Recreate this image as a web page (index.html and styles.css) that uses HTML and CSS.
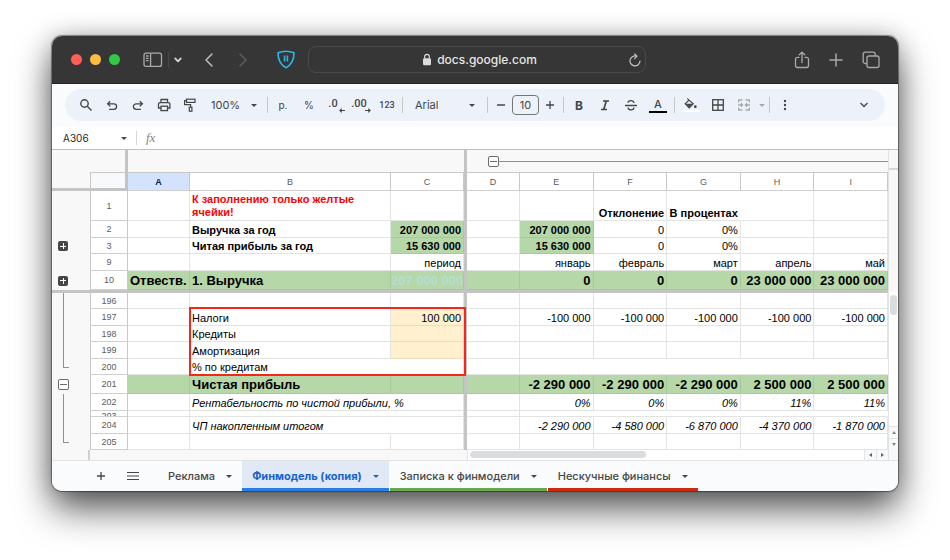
FILE: index.html
```html
<!DOCTYPE html>
<html lang="ru">
<head>
    <meta charset="UTF-8">
    <title>Финмодель</title>
    <link rel="stylesheet" href="styles.css">
</head>
<body>
<div class="window">
    <header class="titlebar">
        <div class="titlebar-left">
            <div class="lights"><span class="light red"></span><span class="light yellow"></span><span class="light green"></span></div>
            <button class="sidebar-btn" aria-label="Боковая панель"><svg width="20" height="16" viewBox="0 0 20 16" fill="none" stroke="#a9a9a9" stroke-width="1.3"><rect x="1" y="1.2" width="17.5" height="13.2" rx="2"/><path d="M7.6 1.2v13.2M3 4h2.6M3 6.3h2.6M3 8.6h2.6"/></svg></button>
            <span class="titlebar-sep"></span>
            <button class="menu-btn" aria-label="Группы вкладок"><svg width="8" height="6" viewBox="0 0 8 6" fill="none" stroke="#ddd" stroke-width="1.6" stroke-linecap="round" stroke-linejoin="round"><path d="M1.2 1.4L4 4.4l2.8-3"/></svg></button>
            <button class="nav-btn" aria-label="Назад"><svg width="10" height="14" viewBox="0 0 10 14" fill="none" stroke="#bdbdbd" stroke-width="1.5" stroke-linecap="round" stroke-linejoin="round"><path d="M8 1L2 7l6 6"/></svg></button>
            <button class="nav-btn" aria-label="Вперёд" disabled><svg width="10" height="14" viewBox="0 0 10 14" fill="none" stroke="#5c5c5c" stroke-width="1.5" stroke-linecap="round" stroke-linejoin="round"><path d="M2 1l6 6-6 6"/></svg></button>
            <button class="shield-btn" aria-label="Защита"><svg width="20" height="19" viewBox="0 0 20 19" fill="none" stroke="#2bb5e8" stroke-width="1.6" stroke-linejoin="round"><path d="M10 1.2c2.8 0 5.6.6 8 1.6.1 7.2-2 11.7-8 15C4 14.500 1.900 10 2 2.800 4.400 1.800 7.200 1.200 10 1.200z"/><path d="M8.600 5.500v6M11.400 5.500v6"/></svg></button>
        </div>
        <div class="address">
            <svg class="lock" width="10" height="13" viewBox="0 0 10 13"><rect x="1" y="5.200" width="8" height="7" rx="1.200" fill="#dcdcdc"/><path d="M2.700 5.500V3.600a2.300 2.300 0 014.600 0v1.900" fill="none" stroke="#dcdcdc" stroke-width="1.200"/></svg>
            <input type="text" class="url" value="docs.google.com" aria-label="Адрес">
            <button class="reload" aria-label="Обновить"><svg width="14" height="14" viewBox="0 0 14 14" fill="none" stroke="#c4c4c4" stroke-width="1.200" stroke-linecap="round" stroke-linejoin="round"><path d="M8.800 3.200A5 5 0 1012 8M6.600.8l2.400 2.400-2.400 2.400"/></svg></button>
        </div>
        <div class="titlebar-right">
            <button aria-label="Поделиться"><svg width="16" height="18" viewBox="0 0 16 18" fill="none" stroke="#a9a9a9" stroke-width="1.300" stroke-linecap="round" stroke-linejoin="round"><path d="M5 6.300H3.500A2 2 0 001.500 8v6.500a2 2 0 002 2h9a2 2 0 002-2V8a2 2 0 00-2-1.700H11M8 11.500V1.200M5.200 3.800L8 1.200l2.800 2.600"/></svg></button>
            <button aria-label="Новая вкладка"><svg width="14" height="14" viewBox="0 0 14 14" stroke="#a9a9a9" stroke-width="1.500" stroke-linecap="round"><path d="M7 1v12M1 7h12"/></svg></button>
            <button aria-label="Все вкладки"><svg width="18" height="18" viewBox="0 0 18 18" fill="none" stroke="#a9a9a9" stroke-width="1.300"><rect x="5" y="5" width="12" height="11.500" rx="2"/><path d="M5 12.500H3.200a2 2 0 01-2-2V3.200a2 2 0 012-2h8a2 2 0 012 2V5"/></svg></button>
        </div>
    </header>

    <div class="toolbar-wrap">
        <div class="toolbar">
            <button class="tool" aria-label="Поиск"><svg width="14" height="14" viewBox="0 0 14 14" fill="none" stroke="#444746" stroke-width="1.400"><circle cx="5.500" cy="5.500" r="3.700"/><path d="M8.300 8.300l4.200 4.200"/></svg></button>
            <button class="tool" aria-label="Отменить"><svg width="14" height="14" viewBox="0 0 14 14" fill="none" stroke="#444746" stroke-width="1.300"><path d="M5.200 3.200L2.600 5.800l2.600 2.600M2.800 5.800h6a2.700 2.700 0 010 5.600H4.200"/></svg></button>
            <button class="tool" aria-label="Повторить"><svg width="14" height="14" viewBox="0 0 14 14" fill="none" stroke="#444746" stroke-width="1.300"><path d="M8.800 3.200l2.600 2.600-2.600 2.600M11.200 5.800h-6a2.700 2.700 0 000 5.600h4.600"/></svg></button>
            <button class="tool" aria-label="Печать"><svg width="14" height="14" viewBox="0 0 14 14" fill="none" stroke="#444746" stroke-width="1.300"><path d="M4 4.500v-3h6.500v3M4 10H1.500V6.200a1.600 1.600 0 011.600-1.600h8.200a1.600 1.600 0 011.600 1.600V10h-2.400"/><rect x="4" y="8.200" width="6.500" height="4.400"/></svg></button>
            <button class="tool" aria-label="Формат по образцу"><svg width="14" height="14" viewBox="0 0 14 14" fill="none" stroke="#444746" stroke-width="1.200"><rect x="3.500" y="1.200" width="8.500" height="3.200"/><path d="M3.500 2.700H1.600V6.700h6v2.500"/><rect x="6.300" y="9.200" width="2.600" height="4"/></svg></button>
            <label class="dropdown zoom"><select aria-label="Масштаб"><option>100%</option></select></label>
            <span class="sep"></span>
            <button class="tool small">р.</button>
            <button class="tool small">%</button>
            <button class="tool decimals" aria-label="Меньше знаков"><span>.0</span><svg width="6" height="5" viewBox="0 0 6 5" fill="none" stroke="#444746" stroke-width="1.100"><path d="M6 2.500H1M2.800.6L.9 2.500l1.900 1.900"/></svg></button>
            <button class="tool decimals" aria-label="Больше знаков"><span>.00</span><svg width="6" height="5" viewBox="0 0 6 5" fill="none" stroke="#444746" stroke-width="1.100"><path d="M0 2.500h5M3.200.6l1.900 1.900-1.900 1.900"/></svg></button>
            <button class="tool number">123</button>
            <span class="sep"></span>
            <label class="dropdown font"><select aria-label="Шрифт"><option>Arial</option></select></label>
            <span class="sep"></span>
            <button class="tool step" aria-label="Уменьшить"><svg width="10" height="10" viewBox="0 0 10 10" stroke="#444746" stroke-width="1.300"><path d="M1 5h8"/></svg></button>
            <input type="text" class="font-size" value="10" aria-label="Размер шрифта">
            <button class="tool step" aria-label="Увеличить"><svg width="10" height="10" viewBox="0 0 10 10" stroke="#444746" stroke-width="1.300"><path d="M1 5h8M5 1v8"/></svg></button>
            <span class="sep"></span>
            <button class="tool bold">B</button>
            <button class="tool" aria-label="Курсив"><svg width="12" height="12" viewBox="0 0 12 12" fill="none" stroke="#444746" stroke-width="1.700"><path d="M4 2h6M2 10.500h6M7.300 2L4.700 10.500"/></svg></button>
            <button class="tool" aria-label="Зачёркнутый"><svg width="14" height="14" viewBox="0 0 14 14" fill="none" stroke="#444746" stroke-width="1.300"><path d="M1 7.500h12M10 5C9.800 3.400 8.600 2.600 7 2.600c-1.700 0-3 .9-3 2.200M4 9.600c.1 1.400 1.300 2.200 3 2.200s3-.8 3-2.200"/></svg></button>
            <button class="tool color text-color" aria-label="Цвет текста"><span>A</span></button>
            <span class="sep"></span>
            <button class="tool color fill-color" aria-label="Цвет заливки"><svg width="14" height="12" viewBox="0 0 14 12"><path d="M3.300.6l5.900 5.200-4 4-4-4 3.800-3.700" fill="none" stroke="#444746" stroke-width="1.200"/><path d="M1.600 5.800h7.200L5.200 9.500z" fill="#444746"/><circle cx="11.300" cy="8.700" r="1.400" fill="#444746"/></svg></button>
            <button class="tool" aria-label="Границы"><svg width="14" height="14" viewBox="0 0 14 14" fill="none" stroke="#444746" stroke-width="1.300"><rect x="1.700" y="1.700" width="10.600" height="10.600"/><path d="M7 1.700v10.600M1.700 7h10.600"/></svg></button>
            <button class="tool" aria-label="Объединить" disabled><svg width="14" height="14" viewBox="0 0 14 14" fill="none" stroke="#a6a9ac" stroke-width="1.300"><path d="M5.500 2H1.700v2.500M8.500 2h3.800v2.500M5.500 12H1.700V9.500M8.500 12h3.800V9.500M1 7h4.500M13 7H8.500M4 5.300L5.600 7 4 8.700M10 5.300L8.400 7 10 8.700"/></svg></button>
            <button class="merge-menu" aria-label="Варианты объединения" disabled><span class="caret"></span></button>
            <span class="sep"></span>
            <button class="tool" aria-label="Ещё"><svg width="4" height="12" viewBox="0 0 4 12" fill="#444746"><circle cx="2" cy="2" r="1.200"/><circle cx="2" cy="6" r="1.200"/><circle cx="2" cy="10" r="1.200"/></svg></button>
            <button class="tool collapse" aria-label="Скрыть меню"><svg width="10" height="8" viewBox="0 0 10 8" fill="none" stroke="#444746" stroke-width="1.300"><path d="M1.500 2L5 5.500 8.500 2"/></svg></button>
        </div>
    </div>

    <div class="formula-bar">
        <input type="text" class="name-box" value="A306" aria-label="Имя ячейки">
        <button class="name-menu" aria-label="Диапазоны"><span class="caret"></span></button>
        <label class="fx" for="formula">fx</label>
        <input type="text" class="formula" id="formula">
    </div>

    <div class="sheet">
        <table class="grid">
            <colgroup>
                <col class="c-gutter"><col class="c-num"><col class="c-a"><col class="c-b"><col class="c-c"><col class="c-freeze"><col class="c-d"><col><col><col><col><col>
            </colgroup>
            <thead>
                <tr class="outline">
                    <td colspan="2" class="corner-top"></td>
                    <td colspan="3"></td>
                    <td class="freeze"></td>
                    <td colspan="6"><div class="col-group"><button class="toggle" aria-label="Свернуть"></button><span></span></div></td>
                </tr>
                <tr class="letters">
                    <td class="corner-left"></td><td class="corner"></td>
                    <th class="selected">A</th><th>B</th><th>C</th><td class="freeze"></td><th>D</th><th>E</th><th>F</th><th>G</th><th>H</th><th>I</th>
                </tr>
            </thead>
            <tbody>
                <tr class="tall bold-row"><td class="gutter"></td><th>1</th><td></td><td class="warning">К заполнению только желтые ячейки!</td><td></td><td class="freeze"></td><td></td><td></td><td>Отклонение</td><td class="open">В процентах</td><td></td><td></td></tr>
                <tr><td class="gutter"></td><th>2</th><td></td><td class="strong">Выручка за год</td><td class="green strong">207 000 000</td><td class="freeze"></td><td></td><td class="green strong">207 000 000</td><td>0</td><td>0%</td><td></td><td></td></tr>
                <tr class="short"><td class="gutter"><button class="expand" aria-label="Развернуть"></button></td><th>3</th><td></td><td class="strong">Читая прибыль за год</td><td class="green strong">15 630 000</td><td class="freeze"></td><td></td><td class="green strong">15 630 000</td><td>0</td><td>0%</td><td></td><td></td></tr>
                <tr><td class="gutter"></td><th>9</th><td></td><td></td><td>период</td><td class="freeze"></td><td></td><td>январь</td><td>февраль</td><td>март</td><td>апрель</td><td>май</td></tr>
                <tr class="total"><td class="gutter"><button class="expand" aria-label="Развернуть"></button></td><th>10</th><td>Отвеств.</td><td>1. Выручка</td><td class="pale">207 000 000</td><td class="freeze"></td><td></td><td>0</td><td>0</td><td>0</td><td>23 000 000</td><td>23 000 000</td></tr>
                <tr class="freeze-row"><td colspan="12"></td></tr>
                <tr class="short"><td class="gutter line"></td><th>196</th><td></td><td></td><td></td><td class="freeze"></td><td></td><td></td><td></td><td></td><td></td><td></td></tr>
                <tr><td class="gutter line"></td><th>197</th><td></td><td class="framed">Налоги<span class="frame"></span></td><td class="input">100 000</td><td class="freeze"></td><td></td><td>-100 000</td><td>-100 000</td><td>-100 000</td><td>-100 000</td><td>-100 000</td></tr>
                <tr class="short"><td class="gutter line"></td><th>198</th><td></td><td>Кредиты</td><td class="input"></td><td class="freeze"></td><td></td><td></td><td></td><td></td><td></td><td></td></tr>
                <tr><td class="gutter line"></td><th>199</th><td></td><td>Амортизация</td><td class="input"></td><td class="freeze"></td><td></td><td></td><td></td><td></td><td></td><td></td></tr>
                <tr class="short"><td class="gutter end"><span></span></td><th>200</th><td></td><td class="open">% по кредитам</td><td></td><td class="freeze"></td><td></td><td class="open"></td><td class="open"></td><td class="open"></td><td class="open"></td><td class="open"></td></tr>
                <tr class="total"><td class="gutter"><button class="toggle" aria-label="Свернуть"></button></td><th>201</th><td></td><td>Чистая прибыль</td><td></td><td class="freeze"></td><td></td><td>-2 290 000</td><td>-2 290 000</td><td>-2 290 000</td><td>2 500 000</td><td>2 500 000</td></tr>
                <tr class="italic"><td class="gutter line"></td><th>202</th><td></td><td class="open">Рентабельность по чистой прибыли, %</td><td></td><td class="freeze"></td><td></td><td>0%</td><td>0%</td><td>0%</td><td>11%</td><td>11%</td></tr>
                <tr class="thin"><td class="gutter line"></td><th><div>203</div></th><td></td><td class="open"></td><td></td><td class="freeze"></td><td></td><td class="open"></td><td class="open"></td><td class="open"></td><td class="open"></td><td class="open"></td></tr>
                <tr class="italic"><td class="gutter line"></td><th>204</th><td></td><td class="open">ЧП накопленным итогом</td><td></td><td class="freeze"></td><td></td><td>-2 290 000</td><td>-4 580 000</td><td>-6 870 000</td><td>-4 370 000</td><td>-1 870 000</td></tr>
                <tr class="short"><td class="gutter end"><span></span></td><th>205</th><td></td><td></td><td></td><td class="freeze"></td><td></td><td></td><td></td><td></td><td></td><td></td></tr>
            </tbody>
        </table>
        <div class="vscroll">
            <div class="vscroll-top"></div>
            <div class="vscroll-frozen"></div>
            <div class="vscroll-track"><div class="vthumb"></div></div>
            <button class="arrow" aria-label="Вверх"><svg width="4" height="3" viewBox="0 0 4 3"><path d="M0 3l2-3 2 3z" fill="#80868b"/></svg></button>
            <button class="arrow" aria-label="Вниз"><svg width="4" height="3" viewBox="0 0 4 3"><path d="M0 0l2 3 2-3z" fill="#80868b"/></svg></button>
        </div>
    </div>
    <div class="hscroll">
        <div class="hscroll-gutter"></div>
        <div class="hscroll-frozen"></div>
        <div class="hscroll-track"><div class="hthumb"></div></div>
        <button class="arrow" aria-label="Влево"><svg width="3" height="4" viewBox="0 0 3 4"><path d="M3 0L0 2l3 2z" fill="#5f6368"/></svg></button>
        <button class="arrow" aria-label="Вправо"><svg width="3" height="4" viewBox="0 0 3 4"><path d="M0 0l3 2-3 2z" fill="#5f6368"/></svg></button>
        <div class="hscroll-corner"></div>
    </div>

    <footer class="tabs">
        <button class="tab-tool" aria-label="Добавить лист"><svg width="10" height="10" viewBox="0 0 10 10" stroke="#444746" stroke-width="1.300"><path d="M5 1v8M1 5h8"/></svg></button>
        <button class="tab-tool" aria-label="Все листы"><svg width="12" height="10" viewBox="0 0 12 10" stroke="#444746" stroke-width="1.200"><path d="M0 1.500h12M0 5h12M0 8.500h12"/></svg></button>
        <button class="tab first">Реклама<span class="caret"></span></button>
        <button class="tab active">Финмодель (копия)<span class="caret"></span></button>
        <button class="tab tab-green">Записка к финмодели<span class="caret"></span></button>
        <button class="tab tab-red">Нескучные финансы<span class="caret"></span></button>
    </footer>
</div>
</body>
</html>
```
FILE: styles.css
```css
* {
    box-sizing: border-box;
}
body {
    min-height: 100vh;
    margin: 0;
    padding: 36px 52px;
    background: #fff;
    font-family: "Liberation Sans", Arial, sans-serif;
    font-size: 11px;
    color: #000;
}
button, input, select {
    margin: 0;
    padding: 0;
    border: 0;
    background: none;
    font: inherit;
    color: inherit;
}
button {
    display: flex;
    align-items: center;
    justify-content: center;
    flex: none;
}
svg {
    display: block;
}
.window {
    border-radius: 10px;
    background: #fff;
    overflow: hidden;
    box-shadow: 0 0 1px 1px rgba(0,0,0,0.4), 0 18px 36px rgba(0,0,0,0.65), 0 0 24px rgba(0,0,0,0.2);
}

/* browser bar */
.titlebar {
    display: flex;
    align-items: center;
    height: 48px;
    background: #363636;
    border-bottom: 1px solid #222;
    font-family: Inter, sans-serif;
}
.titlebar-left {
    display: flex;
    align-items: center;
    flex: none;
    width: 256px;
    padding-left: 19px;
}
.lights {
    display: flex;
    gap: 8px;
    margin-right: 23px;
}
.light {
    width: 11px;
    height: 11px;
    border-radius: 50%;
}
.red { background: #fe5f57; }
.yellow { background: #febb40; }
.green.light { background: #33c748; }
.titlebar-sep {
    width: 1px;
    height: 16px;
    margin: 0 5px;
    background: #484848;
}
.nav-btn {
    margin-left: 24px;
}
.menu-btn + .nav-btn {
    margin-left: 22px;
}
.shield-btn {
    margin-left: 28px;
}
.address {
    display: flex;
    align-items: center;
    flex: 0 1 40%;
    height: 27px;
    padding: 0 3px 0 24px;
    border: 1px solid #4a4a4a;
    border-radius: 8px;
}
.lock {
    margin-left: auto;
}
.url {
    width: 102px;
    margin-left: 5px;
    font-size: 12px;
    font-weight: 500;
    color: #e6e6e6;
}
.reload {
    margin-left: auto;
}
.titlebar-right {
    display: flex;
    align-items: center;
    gap: 19px;
    margin-left: auto;
    padding-right: 18px;
}

/* toolbar */
.toolbar-wrap {
    padding: 5px 13px 6px;
    background: #f9fbfd;
}
.toolbar {
    display: flex;
    align-items: center;
    height: 32px;
    padding: 0 8px;
    border-radius: 16px;
    background: #edf2fa;
    color: #444746;
    font-family: Inter, sans-serif;
}
.tool {
    width: 26px;
    height: 24px;
}
.sep {
    flex: none;
    width: 1px;
    height: 16px;
    margin: 0 2px;
    background: #c7c7c7;
}
.dropdown {
    display: flex;
    align-items: center;
    justify-content: space-between;
    flex: none;
    padding: 0 8px;
}
.dropdown select {
    appearance: none;
    font-size: 11px;
}
.dropdown::after, .caret {
    content: "";
    border: 3px solid transparent;
    border-top-color: currentColor;
    border-bottom: 0;
}
.zoom {
    width: 62px;
}
.font {
    width: 80px;
    padding: 0 10px;
}
.small {
    font-size: 10px;
}
.decimals {
    align-items: flex-end;
    height: 16px;
    font-family: Roboto, sans-serif;
    font-size: 11px;
    font-weight: 500;
    position: relative;
}
.decimals span {
    height: 16px;
    margin-right: 4px;
}
.decimals svg {
    position: absolute;
    right: 3px;
    bottom: 0;
}
.number {
    font-family: Roboto, sans-serif;
    font-size: 9px;
    font-weight: 500;
}
.step {
    width: 22px;
}
.font-size {
    flex: none;
    width: 27px;
    height: 20px;
    border: 1px solid #747775;
    border-radius: 4px;
    text-align: center;
}
.bold {
    font-size: 12px;
    font-weight: 700;
}
.color {
    flex-direction: column;
    width: 28px;
    height: 16px;
    font-size: 11px;
    font-weight: 500;
}
.color::after {
    content: "";
    width: 18px;
    height: 2px;
    flex: none;
    background: #000;
}
.fill-color::after {
    background: #fff;
}
.merge-menu {
    width: 10px;
    color: #a6a9ac;
}
.collapse {
    margin-left: auto;
}

/* formula bar */
.formula-bar {
    display: flex;
    align-items: center;
    height: 23px;
    border-bottom: 1px solid #c0c0c0;
}
.name-box {
    width: 56px;
    margin-left: 11px;
    font-family: Inter, sans-serif;
    font-size: 10px;
    color: #1f1f1f;
}
.name-menu {
    width: 9px;
    color: #444746;
}
.fx {
    margin-left: 8px;
    padding-left: 9px;
    border-left: 1px solid #d5d5d5;
    font-family: "Liberation Serif", serif;
    font-size: 13px;
    font-style: italic;
    line-height: 14px;
    color: #80868b;
}
.formula {
    flex: 1;
}

/* grid */
.sheet {
    display: flex;
}
.grid {
    flex: 1;
    width: 0;
    table-layout: fixed;
    border-spacing: 0;
    line-height: 12px;
}
.c-gutter { width: 39px; }
.c-num { width: 37px; }
.c-a { width: 62px; }
.c-b { width: 201px; }
.c-c { width: 73px; }
.c-freeze { width: 3px; }
.c-d { width: 53px; }
.grid tr {
    height: 17px;
}
.grid .short {
    height: 16px;
}
.grid td {
    padding: 0 2px 1px;
    border-right: 1px solid #e2e3e3;
    border-bottom: 1px solid #e2e3e3;
    text-align: right;
    vertical-align: bottom;
    white-space: nowrap;
}
.grid td:nth-child(3), .grid td:nth-child(4) {
    text-align: left;
}
.grid th {
    padding: 0;
    border-right: 1px solid #c8c8c8;
    border-bottom: 1px solid #d0d0d0;
    background: #fff;
    font-size: 9px;
    font-weight: 400;
    line-height: 10px;
    color: #5a5d60;
}
.grid .outline {
    height: 22px;
}
.grid .outline td {
    padding: 0;
    border: 0;
    background: #f8f8f8;
    vertical-align: middle;
}
.grid .outline .corner-top {
    border-right: 3px solid #c4c4c4;
}
.col-group {
    display: flex;
    align-items: center;
    padding-left: 21px;
}
.col-group span {
    flex: 1;
    height: 1px;
    background: #909090;
}
.grid .letters {
    height: 19px;
}
.letters th {
    border-top: 1px solid #c8c8c8;
}
.grid .letters .selected {
    background: #d3e3fd;
    font-weight: 700;
    color: #041e49;
}
.grid .corner-left {
    border-right: 1px solid #c8c8c8;
    border-bottom: 3px solid #c4c4c4;
    background: #f8f8f8;
}
.grid .corner {
    border-top: 1px solid #c8c8c8;
    border-right: 3px solid #c4c4c4;
    border-bottom: 3px solid #c4c4c4;
    background: #f8f9fa;
}
.grid .freeze, .grid .outline .freeze {
    padding: 0;
    border: 0;
    background: #c4c4c4;
}
.grid .freeze-row {
    height: 3px;
}
.grid .freeze-row td {
    padding: 0;
    border: 0;
    background: #c4c4c4;
}
.grid .tall {
    height: 30px;
}
.bold-row td, .grid .strong {
    font-weight: 700;
}
.grid .warning {
    padding-top: 2px;
    color: #f00;
    line-height: 13px;
    white-space: normal;
}
.grid .green, .total td {
    background: #b6d7a8;
}
.grid .green, .grid .total td {
    border-color: #a9c99b;
}
.grid .total {
    height: 19px;
    font-size: 13px;
    font-weight: 700;
    line-height: 15px;
}
.grid .total .pale {
    padding: 0 0 1px;
    color: #b5ddd2;
}
.grid .open {
    border-right-color: transparent;
}
.grid .input {
    background: #fff0d0;
    border-color: #ecdcbc;
}
.italic td {
    font-style: italic;
}
.grid .thin {
    height: 6px;
}
.grid .thin td {
    padding: 0;
}
.thin th div {
    height: 5px;
    overflow: hidden;
}

/* red frame over B197:C200 */
.framed {
    position: relative;
}
.frame {
    position: absolute;
    top: -2px;
    left: -1px;
    width: 277px;
    height: 69px;
    border: 2px solid #f9251a;
    pointer-events: none;
}

/* row groups */
.grid td.gutter {
    padding: 0;
    border-right: 1px solid #c8c8c8;
    border-bottom: 0;
    background: #f8f8f8;
    vertical-align: middle;
}
.grid td.line {
    background: linear-gradient(#909090, #909090) 11px 0 / 1px 100% no-repeat #f8f8f8;
}
.grid td.end {
    vertical-align: top;
}
.end span {
    display: block;
    width: 6px;
    height: 9px;
    margin-left: 11px;
    border-left: 1px solid #909090;
    border-bottom: 1px solid #909090;
}
.toggle, .expand {
    width: 11px;
    height: 11px;
    border: 1px solid #6a6d70;
    border-radius: 2px;
    background: linear-gradient(#6a6d70, #6a6d70) center / 7px 1px no-repeat #fff;
}
.gutter .toggle, .gutter .expand {
    margin-left: 6px;
}
.expand {
    width: 10px;
    height: 10px;
    border: 0;
    background: linear-gradient(#fff, #fff) center / 6px 1px no-repeat, linear-gradient(#fff, #fff) center / 1px 6px no-repeat #444746;
}

/* scrollbars */
.vscroll {
    display: flex;
    flex-direction: column;
    width: 10px;
    border-left: 1px solid #e2e3e3;
}
.vscroll-top {
    height: 20px;
    border-bottom: 2px solid #d5d7da;
    background: #f8f8f8;
}
.vscroll-frozen {
    height: 122px;
    background: #f8f8f8;
}
.vscroll-track {
    flex: 1;
    padding: 3px 1px;
}
.vthumb {
    height: 20px;
    border-radius: 4px;
    background: #dadce0;
}
.arrow {
    border: 1px solid #e2e3e3;
    background: #f8f9fa;
}
.vscroll .arrow {
    height: 12px;
    border-width: 1px 0 0;
}
.hscroll {
    display: flex;
    height: 11px;
    border-bottom: 1px solid #e2e3e3;
}
.hscroll-gutter {
    width: 38px;
    border-right: 2px solid #d0d0d0;
    background: #f8f8f8;
}
.hscroll-frozen {
    width: 378px;
    border-right: 1px solid #e2e3e3;
    background: #f8f8f8;
}
.hscroll-track {
    flex: 1;
    padding: 1px 2px;
}
.hthumb {
    width: 45%;
    height: 7px;
    border-radius: 4px;
    background: #dadce0;
}
.hscroll .arrow {
    width: 12px;
    border-width: 0 0 0 1px;
}
.hscroll-corner {
    width: 10px;
    border-left: 1px solid #e2e3e3;
    background: #f8f8f8;
}

/* sheet tabs */
.tabs {
    display: flex;
    height: 30px;
    padding-left: 33px;
    background: #f9fbfd;
    font-family: Inter, sans-serif;
    font-size: 11px;
    font-weight: 500;
    color: #444746;
}
.tab-tool {
    width: 32px;
}
.tab {
    gap: 11px;
    padding: 0 10px;
    border-top: 3px solid transparent;
    border-bottom: 3px solid transparent;
    margin-right: 1px;
}
.first {
    margin-right: 0;
    margin-left: 9px;
}
.active {
    border-top-color: #e1e9f7;
    border-bottom-color: #2a7de1;
    background: #e1e9f7;
    font-weight: 700;
    color: #1663d0;
}
.tab-green {
    border-bottom-color: #6aa84f;
}
.tab-red {
    border-bottom-color: #cc2a0e;
}
```
